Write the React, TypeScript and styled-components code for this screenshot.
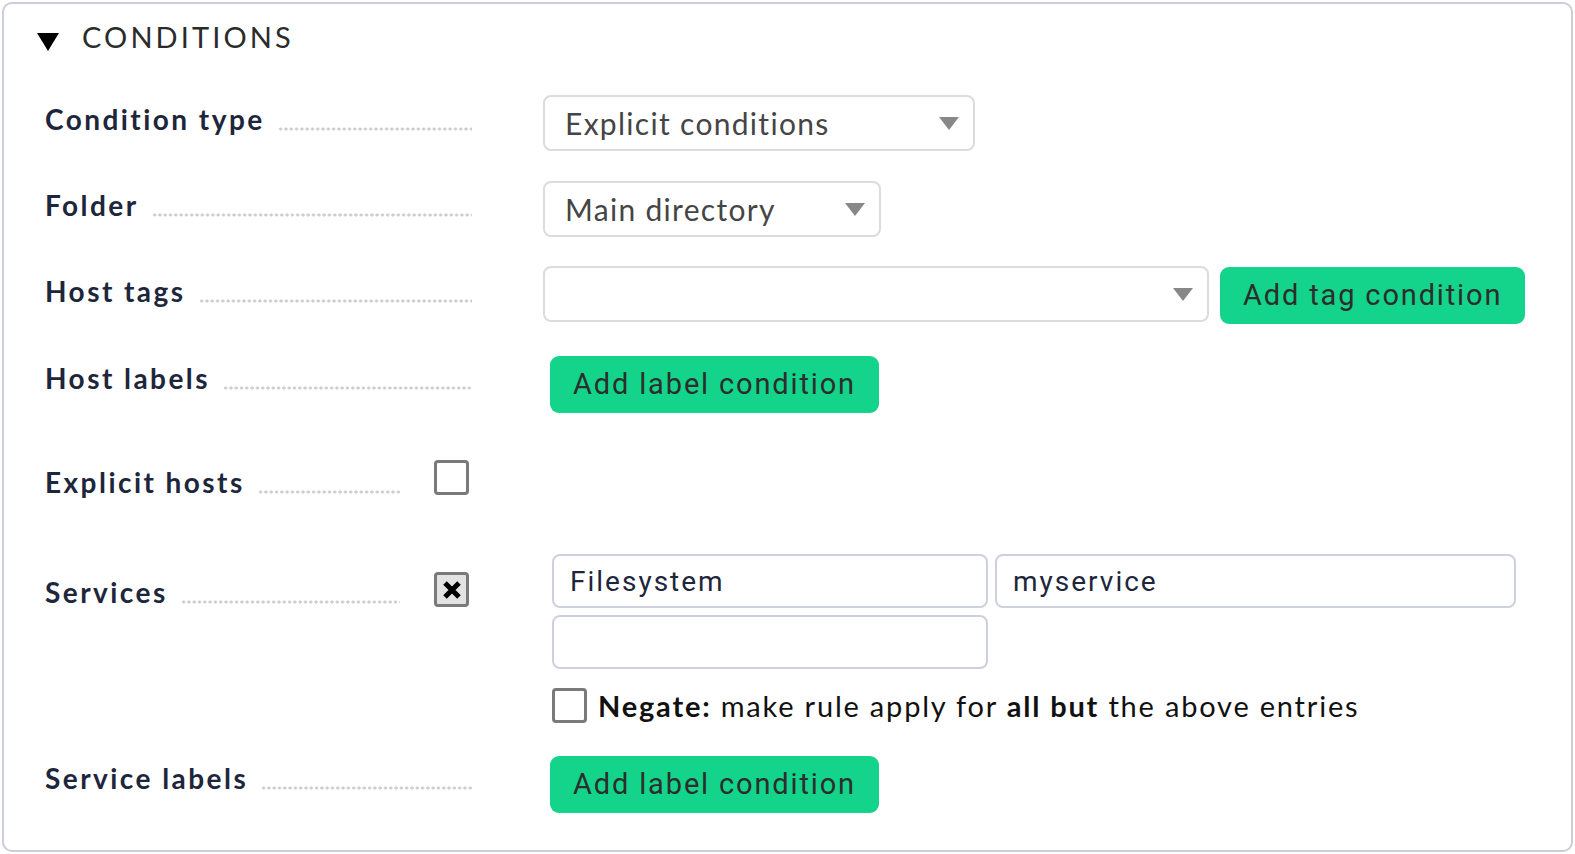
import React from 'react';
import styled, { createGlobalStyle } from 'styled-components';

const GlobalStyle = createGlobalStyle`
  html, body { margin: 0; padding: 0; background: #ffffff; }
  body { font-family: Lato, "Noto Sans", sans-serif; }
  * { box-sizing: border-box; }
`;

const Panel = styled.section`
  margin: 2px;
  height: 850px;
  border: 2px solid #cbcdda;
  border-radius: 10px;
  background: #ffffff;
  padding-top: 14px;
`;

const Header = styled.div`
  display: flex;
  align-items: flex-start;
  padding-left: 33px;
  height: 34px;
`;

const Toggle = styled.svg`
  flex: none;
  width: 22px;
  height: 18px;
  margin-top: 15px;
`;

const Title = styled.h2`
  margin: 2px 0 0 23px;
  font: 400 29px/34px Lato, sans-serif;
  letter-spacing: 3.1px;
  color: #2b2b2b;
`;

const Form = styled.div`
  display: flex;
  flex-direction: column;
  padding-left: 41px;
`;

const Row = styled.div<{ $mt: number }>`
  display: grid;
  grid-template-columns: 427px 1fr;
  column-gap: 71px;
  align-items: start;
  margin-top: ${(p) => p.$mt}px;
`;

const LabelCell = styled.div`
  display: flex;
  align-items: flex-start;
`;

const LabelLine = styled.div<{ $pt: number }>`
  flex: 1;
  min-width: 0;
  display: flex;
  align-items: flex-start;
  padding-top: ${(p) => p.$pt}px;
`;

const LabelText = styled.span`
  font: 700 28px/34px Lato, sans-serif;
  letter-spacing: 2.45px;
  color: #1e263c;
  white-space: nowrap;
`;

const Leader = styled.span`
  flex: 1;
  height: 29px;
  margin-left: 13px;
  background-image: radial-gradient(circle, #cccccc 1.3px, transparent 1.8px);
  background-size: 5.3px 4px;
  background-position: 0 100%;
  background-repeat: repeat-x;
`;

const Box = styled.span<{ $checked?: boolean; $mt?: number }>`
  flex: none;
  display: flex;
  align-items: center;
  justify-content: center;
  width: 35px;
  height: 35px;
  margin-top: ${(p) => p.$mt ?? 0}px;
  border: 3px solid #7a7a7a;
  border-radius: 4px;
  background: ${(p) => (p.$checked ? '#e3e3e3' : '#ffffff')};
`;

const LabelBox = styled(Box)`
  margin-left: 34px;
  margin-right: 3px;
`;

const FieldLine = styled.div`
  display: flex;
  align-items: flex-start;
  gap: 11px;
`;

const Select = styled.div<{ $w: number }>`
  display: flex;
  align-items: center;
  justify-content: space-between;
  width: ${(p) => p.$w}px;
  height: 56px;
  padding: 0 14px 0 20px;
  border: 2px solid #dcdcdc;
  border-radius: 8px;
  background: #ffffff;
  font: 400 30px/1 Lato, sans-serif;
  letter-spacing: 1.3px;
  color: #454545;
`;

const Arrow = styled.svg`
  flex: none;
  width: 20px;
  height: 13px;
`;

const GreenButton = styled.button<{ $mt?: number; $ml?: number }>`
  height: 57px;
  margin-top: ${(p) => p.$mt ?? 0}px;
  margin-left: ${(p) => p.$ml ?? 0}px;
  padding: 0 23px;
  border: none;
  border-radius: 9px;
  background: #14d38a;
  font: 400 29px/1 Roboto, "Liberation Sans", sans-serif;
  letter-spacing: 1.85px;
  color: #2d2d2d;
  white-space: nowrap;
  cursor: pointer;
`;

const ServiceBlock = styled.div`
  margin-left: 9px;
  display: flex;
  flex-direction: column;
`;

const InputGrid = styled.div`
  display: grid;
  grid-template-columns: 436px 521px;
  gap: 7px;
`;

const TextInput = styled.input`
  display: block;
  width: 100%;
  height: 54px;
  padding: 0 16px;
  border: 2px solid #cdd0de;
  border-radius: 8px;
  background: #ffffff;
  font: 400 28px Roboto, "Liberation Sans", sans-serif;
  letter-spacing: 2px;
  color: #1e263c;
  outline: none;
`;

const NegateRow = styled.div`
  display: flex;
  align-items: center;
  gap: 11px;
  margin-top: 19px;
`;

const NegateText = styled.span`
  font: 400 29px/34px Lato, sans-serif;
  letter-spacing: 1.8px;
  color: #111111;
  white-space: nowrap;
  b { font-weight: 700; }
`;

const DropArrow = () => (
  <Arrow viewBox="0 0 20 13">
    <polygon points="0,0 20,0 10,13" fill="#888888" />
  </Arrow>
);

const Cross = () => (
  <svg width="20" height="18" viewBox="0 0 20 18">
    <path d="M3 2 L17 16 M17 2 L3 16" stroke="#000" strokeWidth="5" strokeLinecap="butt" />
  </svg>
);

const Label: React.FC<{ text: string; pt: number }> = ({ text, pt }) => (
  <LabelLine $pt={pt}>
    <LabelText>{text}</LabelText>
    <Leader />
  </LabelLine>
);

export default function App() {
  return (
    <>
      <GlobalStyle />
      <Panel>
        <Header>
          <Toggle viewBox="0 0 22 18">
            <polygon points="0,0 22,0 11,18" fill="#000" />
          </Toggle>
          <Title>CONDITIONS</Title>
        </Header>
        <Form>
          <Row $mt={43}>
            <LabelCell>
              <Label text="Condition type" pt={7} />
            </LabelCell>
            <Select $w={432}>
              <span>Explicit conditions</span>
              <DropArrow />
            </Select>
          </Row>

          <Row $mt={30}>
            <LabelCell>
              <Label text="Folder" pt={7} />
            </LabelCell>
            <Select $w={338}>
              <span>Main directory</span>
              <DropArrow />
            </Select>
          </Row>

          <Row $mt={29}>
            <LabelCell>
              <Label text="Host tags" pt={8} />
            </LabelCell>
            <FieldLine>
              <Select $w={666}>
                <span />
                <DropArrow />
              </Select>
              <GreenButton $mt={1}>Add tag condition</GreenButton>
            </FieldLine>
          </Row>

          <Row $mt={32}>
            <LabelCell>
              <Label text="Host labels" pt={5} />
            </LabelCell>
            <FieldLine>
              <GreenButton $ml={7}>Add label condition</GreenButton>
            </FieldLine>
          </Row>

          <Row $mt={47}>
            <LabelCell>
              <Label text="Explicit hosts" pt={5} />
              <LabelBox $mt={0} />
            </LabelCell>
            <div />
          </Row>

          <Row $mt={55}>
            <LabelCell>
              <Label text="Services" pt={21} />
              <LabelBox $checked $mt={18}>
                <Cross />
              </LabelBox>
            </LabelCell>
            <ServiceBlock>
              <InputGrid>
                <TextInput defaultValue="Filesystem" />
                <TextInput defaultValue="myservice" />
                <TextInput defaultValue="" />
              </InputGrid>
              <NegateRow>
                <Box />
                <NegateText>
                  <b>Negate:</b> make rule apply for <b>all but</b> the above entries
                </NegateText>
              </NegateRow>
            </ServiceBlock>
          </Row>

          <Row $mt={33}>
            <LabelCell>
              <Label text="Service labels" pt={5} />
            </LabelCell>
            <FieldLine>
              <GreenButton $ml={7}>Add label condition</GreenButton>
            </FieldLine>
          </Row>
        </Form>
      </Panel>
    </>
  );
}
